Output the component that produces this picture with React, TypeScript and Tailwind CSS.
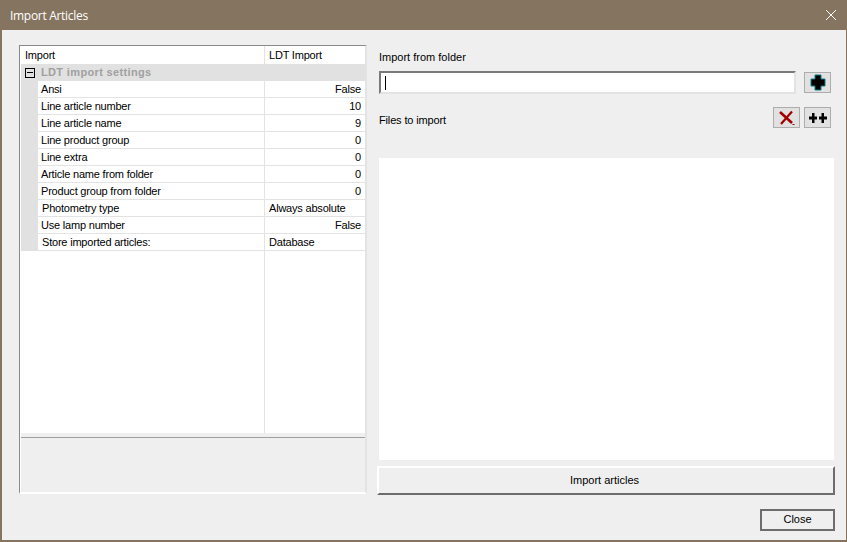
const rows: [string, string, boolean, boolean?][] = [
  ["Ansi", "False", true],
  ["Line article number", "10", true],
  ["Line article name", "9", true],
  ["Line product group", "0", true],
  ["Line extra", "0", true],
  ["Article name from folder", "0", true],
  ["Product group from folder", "0", true],
  ["Photometry type", "Always absolute", false, true],
  ["Use lamp number", "False", true],
  ["Store imported articles:", "Database", false, true],
];

function IconButton({ children, className }: { children: React.ReactNode; className?: string }) {
  return (
    <div className={`w-[27px] h-[21px] bg-[#e1e1e1] border border-[#adadad] flex items-center justify-center ${className ?? ""}`}>
      {children}
    </div>
  );
}

export default function App() {
  return (
    <div
      className="w-[847px] h-[542px] bg-[#efefef] flex flex-col border-l-2 border-r border-b-2 border-[#85745f] text-[11px] text-black overflow-hidden"
      style={{ fontFamily: '"Liberation Sans", Arial, sans-serif' }}
    >
      <div className="h-[30px] -ml-[2px] -mr-px shrink-0 bg-[#85745f] flex items-center justify-between pl-[10px] pr-[10px] text-white">
        <span className="text-[12px] pt-px tracking-[-0.3px]" style={{ fontFamily: '"Open Sans", sans-serif' }}>Import Articles</span>
        <svg width="12" height="12" viewBox="0 0 12 12" stroke="#fff" strokeWidth="1" className="mb-[1px]">
          <path d="M1 1l10 10M11 1L1 11" />
        </svg>
      </div>

      <div className="flex-1 flex min-h-0">
        <div className="ml-[17px] mt-[15px] w-[348px] h-[449px] shrink-0 bg-white border-l border-t border-[#8a8a8a] border-r-2 border-r-[#e3e3e3] border-b-2 border-b-white pl-px flex flex-col tracking-[-0.2px]">
          <div className="h-[18px] flex items-center shrink-0">
            <div className="w-[244px] pl-[4px] border-r border-[#e3e3e3] h-full flex items-center">Import</div>
            <div className="pl-[4px]">LDT Import</div>
          </div>
          <div className="h-[17px] shrink-0 bg-[#e1e1e1] flex items-center">
            <div className="w-[10px] h-[10px] ml-[4px] border border-black flex items-center justify-center">
              <div className="w-[6px] h-px bg-black" />
            </div>
            <span className="ml-[6px] font-bold text-[#a0a0a0] text-[11px] tracking-[0.35px]">LDT import settings</span>
          </div>
          <div className="flex-1 flex flex-col min-h-0">
            {rows.map(([name, value, right, indent]) => (
              <div key={name} className="h-[17px] shrink-0 flex">
                <div className="w-[17px] bg-[#e1e1e1] shrink-0" />
                <div className={`w-[227px] border-r border-b border-[#e3e3e3] flex items-center ${indent ? "pl-[4px]" : "pl-[3px]"}`}>
                  {name}
                </div>
                <div className={`flex-1 border-b border-[#e3e3e3] flex items-center pl-[4px] pr-[4px] ${right ? "justify-end" : ""}`}>
                  {value}
                </div>
              </div>
            ))}
            <div className="flex-1 ml-[243px] border-l border-[#e3e3e3]" />
          </div>
          <div className="h-[59px] shrink-0 bg-[#efefef] pt-[4px]">
            <div className="h-px bg-[#a0a0a0]" />
          </div>
        </div>

        <div className="ml-[11px] w-[458px] flex flex-col shrink-0">
          <div className="mt-[21px] ml-[1px] h-[13px] leading-[13px]">Import from folder</div>
          <div className="mt-[7px] flex items-start">
            <div className="ml-[1px] w-[417px] h-[23px] bg-white border-2 border-t-[#7a7a7a] border-l-[#7a7a7a] border-r-[#e3e3e3] border-b-[#e3e3e3] flex items-center pl-[4px]">
              <div className="w-px h-[14px] bg-black" />
            </div>
            <IconButton className="ml-[8px] mt-[1px]">
              <svg width="16" height="17" viewBox="0 0 16 17" className="block">
                <path d="M5 1h6v4h4v7h-4v4H5v-4H1V5h4z" fill="#000" stroke="#0e7c86" strokeWidth="1" />
              </svg>
            </IconButton>
          </div>
          <div className="mt-[13px] flex items-center">
            <div className="ml-[1px] flex-1 pt-[5px] tracking-[-0.15px]">Files to import</div>
            <IconButton className="mr-[4px]">
              <svg width="17" height="16" viewBox="0 0 17 16" fill="none">
                <path d="M2 2l12 11" stroke="#a00000" strokeWidth="2.600" />
                <path d="M14 1.500L3 14" stroke="#a00000" strokeWidth="2.200" />
                <path d="M14.500 14.500h2" stroke="#a00000" strokeWidth="1" />
              </svg>
            </IconButton>
            <IconButton className="mr-[5px]">
              <svg width="18" height="10" viewBox="0 0 18 10" fill="#000">
                <path d="M3 0h2.500v3.500H8v3H5.500V10H3V6.500H0v-3h3zM12.500 0H15v3.500h3v3h-3V10h-2.500V6.500H10v-3h2.500z" />
              </svg>
            </IconButton>
          </div>
          <div className="mt-[29px] ml-[1px] w-[455px] h-[302px] bg-white" />
          <div className="mt-[6px] -ml-px w-[458px] h-[29px] bg-[#efefef] border-t-2 border-l-2 border-white border-r-2 border-r-[#6d6d6d] border-b-2 border-b-[#6d6d6d] pr-[3px] flex items-center justify-center">
            Import articles
          </div>
          <div className="mt-[14px] mr-[1px] self-end w-[75px] h-[22px] bg-[#efefef] border-2 border-[#6d6d6d] flex items-center justify-center">
            Close
          </div>
        </div>
      </div>
    </div>
  );
}
